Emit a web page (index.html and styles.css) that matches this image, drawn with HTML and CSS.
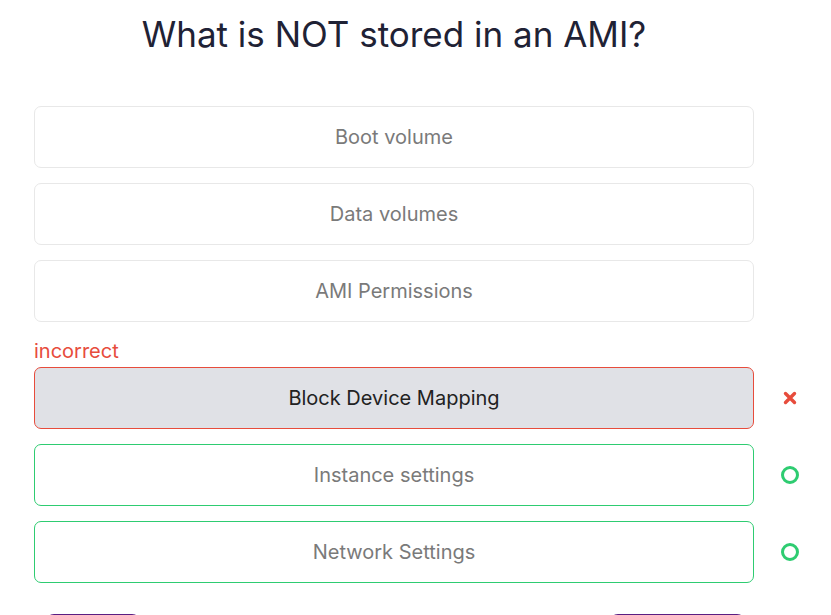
FILE: index.html
```html
<!DOCTYPE html>
<html lang="en">
<head>
<meta charset="utf-8">
<title>Quiz</title>
<link rel="stylesheet" href="styles.css">
</head>
<body>
<main class="quiz">
  <h1 class="question">What is NOT stored in an AMI?</h1>
  <div class="options">
    <div class="row"><div class="option">Boot volume</div><div class="status"></div></div>
    <div class="row"><div class="option">Data volumes</div><div class="status"></div></div>
    <div class="row"><div class="option">AMI Permissions</div><div class="status"></div></div>
    <div class="labelled">
      <div class="label-incorrect">incorrect</div>
      <div class="row">
        <div class="option option-wrong">Block Device Mapping</div>
        <div class="status">
          <svg width="14" height="14" viewBox="0 0 14 14" aria-hidden="true"><path d="M2.5 2.5 L11.5 11.5 M11.5 2.5 L2.5 11.5" stroke="#e74c3c" stroke-width="3.4" stroke-linecap="round"/></svg>
        </div>
      </div>
    </div>
    <div class="row">
      <div class="option option-right">Instance settings</div>
      <div class="status">
        <svg width="20" height="20" viewBox="0 0 20 20" aria-hidden="true"><circle cx="10" cy="10" r="7.5" fill="none" stroke="#2ecc71" stroke-width="3"/></svg>
      </div>
    </div>
    <div class="row">
      <div class="option option-right">Network Settings</div>
      <div class="status">
        <svg width="20" height="20" viewBox="0 0 20 20" aria-hidden="true"><circle cx="10" cy="10" r="7.5" fill="none" stroke="#2ecc71" stroke-width="3"/></svg>
      </div>
    </div>
  </div>
  <div class="actions">
    <button class="btn btn-back" aria-label="Back"></button>
    <button class="btn btn-next" aria-label="Next"></button>
  </div>
</main>
</body>
</html>
```
FILE: styles.css
```css
* { box-sizing: border-box; }
html, body { margin: 0; padding: 0; background: #ffffff; }
body {
  font-family: "Inter", "Noto Sans", sans-serif;
  color: #1f2235;
}
.quiz {
  padding: 0 0 0 34px;
}
.question {
  width: 720px;
  margin: 0;
  padding-top: 12px;
  height: 106px;
  text-align: center;
  font-size: 35px;
  font-weight: 400;
  line-height: 44px;
  color: #1f2235;
}
.options {
  display: flex;
  flex-direction: column;
  gap: 15px;
}
.row {
  display: flex;
  align-items: center;
}
.option {
  width: 720px;
  height: 62px;
  border: 1px solid #e8e8e8;
  border-radius: 7px;
  display: flex;
  align-items: center;
  justify-content: center;
  font-size: 20px;
  color: #7a7a7a;
  background: #ffffff;
}
.option-wrong {
  background: #e0e1e6;
  border-color: #e74c3c;
  color: #222222;
}
.option-right {
  border-color: #2ecc71;
}
.status {
  width: 72px;
  display: flex;
  justify-content: center;
  align-items: center;
}
.label-incorrect {
  color: #e74c3c;
  font-size: 20px;
  line-height: 24px;
  margin-top: 2px;
  margin-bottom: 4px;
}
.actions {
  display: flex;
  justify-content: space-between;
  width: 720px;
  margin-top: 31px;
  padding: 0 9px 0 12px;
}
.btn {
  height: 44px;
  border: none;
  border-radius: 8px;
  background: #5a1e82;
}
.btn-back { width: 94px; }
.btn-next { width: 135px; }
```
